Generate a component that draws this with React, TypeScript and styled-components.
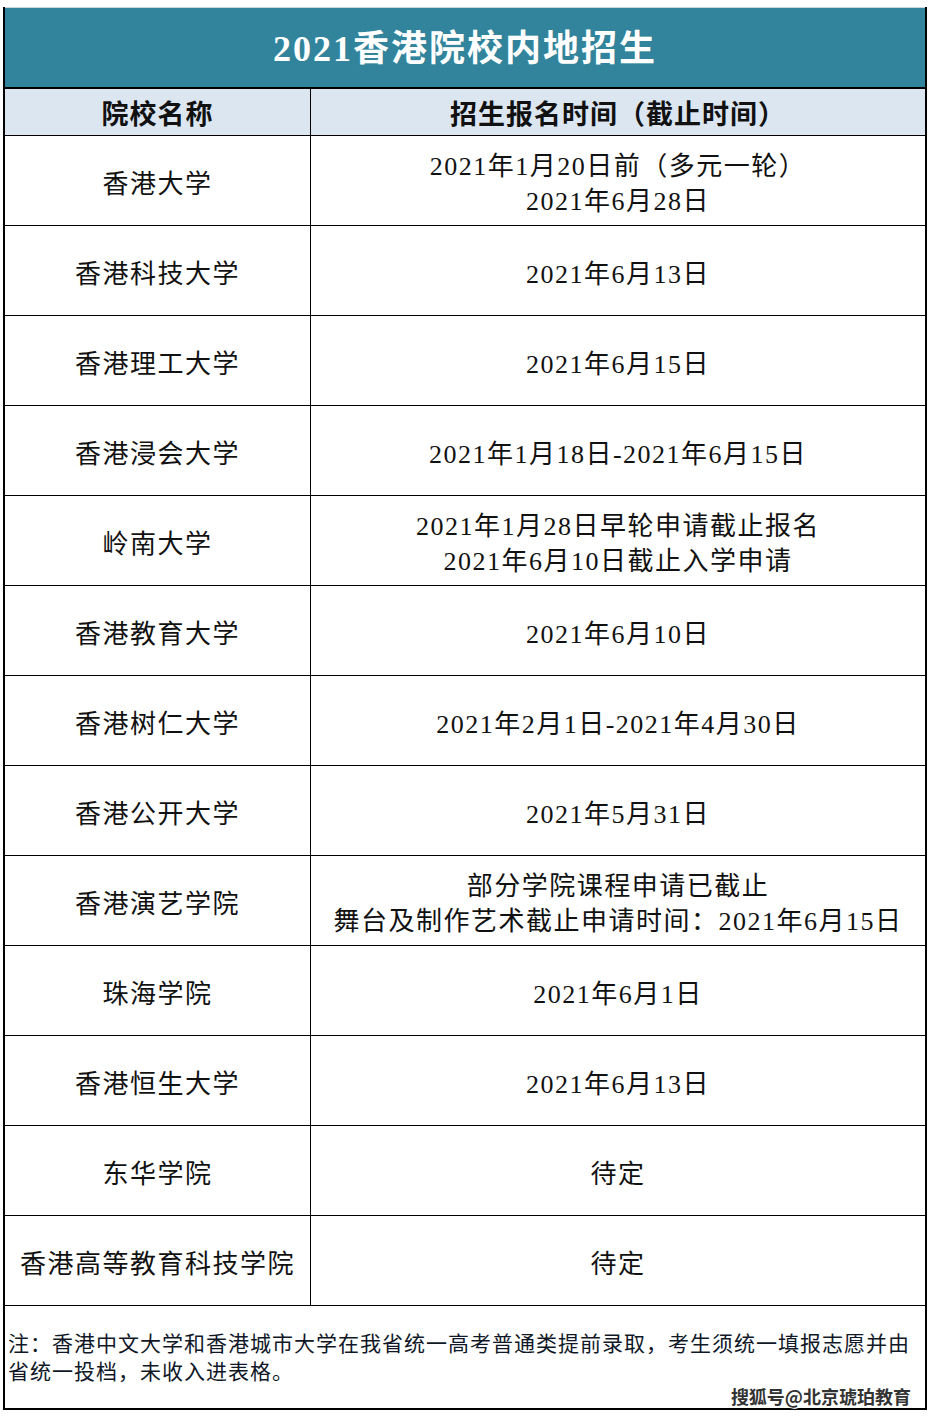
import React from 'react';
import styled, { createGlobalStyle } from 'styled-components';

interface School {
  name: string;
  dates: string[];
}

const schools: School[] = [
  { name: '香港大学', dates: ['2021年1月20日前（多元一轮）', '2021年6月28日'] },
  { name: '香港科技大学', dates: ['2021年6月13日'] },
  { name: '香港理工大学', dates: ['2021年6月15日'] },
  { name: '香港浸会大学', dates: ['2021年1月18日-2021年6月15日'] },
  { name: '岭南大学', dates: ['2021年1月28日早轮申请截止报名', '2021年6月10日截止入学申请'] },
  { name: '香港教育大学', dates: ['2021年6月10日'] },
  { name: '香港树仁大学', dates: ['2021年2月1日-2021年4月30日'] },
  { name: '香港公开大学', dates: ['2021年5月31日'] },
  { name: '香港演艺学院', dates: ['部分学院课程申请已截止', '舞台及制作艺术截止申请时间：2021年6月15日'] },
  { name: '珠海学院', dates: ['2021年6月1日'] },
  { name: '香港恒生大学', dates: ['2021年6月13日'] },
  { name: '东华学院', dates: ['待定'] },
  { name: '香港高等教育科技学院', dates: ['待定'] },
];

const App: React.FC = () => {
  return (
    <>
      <GlobalStyle />
      <Table>
        <Title>2021香港院校内地招生</Title>
        <HeaderRow>
          <HeadCell>院校名称</HeadCell>
          <HeadCell divider>招生报名时间（截止时间）</HeadCell>
        </HeaderRow>
        {schools.map((school) => (
          <Row key={school.name}>
            <Cell>{school.name}</Cell>
            <Cell divider>
              {school.dates.map((line, index) => (
                <Line key={index}>{line}</Line>
              ))}
            </Cell>
          </Row>
        ))}
        <Footer>
          <Note>
            注：香港中文大学和香港城市大学在我省统一高考普通类提前录取，考生须统一填报志愿并由省统一投档，未收入进表格。
          </Note>
          <Watermark>搜狐号@北京琥珀教育</Watermark>
        </Footer>
      </Table>
    </>
  );
};

const GlobalStyle = createGlobalStyle`
  body {
    margin: 0;
    background: #fff;
    font-family: "Liberation Serif", "Noto Sans CJK SC", serif;
    color: #111;
  }
`;

const Table = styled.div`
  margin: 7px 0 0 3px;
  width: 924px;
  box-sizing: border-box;
  border-left: 2px solid #000;
  border-right: 2px solid #000;
  border-bottom: 2px solid #000;
`;

const Title = styled.div`
  height: 80px;
  box-sizing: border-box;
  padding-bottom: 6px;
  border-top: 1px solid #c9d5e0;
  background: #31849b;
  color: #fff;
  font-size: 36px;
  font-weight: bold;
  letter-spacing: 2px;
  display: flex;
  align-items: center;
  justify-content: center;
`;

const HeaderRow = styled.div`
  display: grid;
  grid-template-columns: 305px 1fr;
  height: 48px;
  box-sizing: border-box;
  border-top: 2px solid #000;
  background: #dce6f1;
`;

const HeadCell = styled.div<{ divider?: boolean }>`
  display: flex;
  align-items: center;
  justify-content: center;
  font-size: 27px;
  font-weight: bold;
  letter-spacing: 1px;
  border-left: ${(p) => (p.divider ? '1px solid #000' : 'none')};
`;

const Row = styled.div`
  display: grid;
  grid-template-columns: 305px 1fr;
  height: 90px;
  box-sizing: border-box;
  border-top: 1px solid #000;
`;

const Cell = styled.div<{ divider?: boolean }>`
  display: flex;
  flex-direction: column;
  align-items: center;
  justify-content: center;
  padding-top: 7px;
  font-size: 26px;
  letter-spacing: 1.5px;
  line-height: 35px;
  border-left: ${(p) => (p.divider ? '1px solid #000' : 'none')};
`;

const Line = styled.div`
  white-space: nowrap;
`;

const Footer = styled.div`
  display: flex;
  flex-direction: column;
  height: 103px;
  box-sizing: border-box;
  border-top: 1.5px solid #000;
  padding: 24px 14px 0 3px;
`;

const Note = styled.div`
  font-size: 21px;
  line-height: 28px;
  letter-spacing: 1px;
  color: #101828;
`;

const Watermark = styled.div`
  align-self: flex-end;
  font-family: "Noto Sans CJK SC", sans-serif;
  font-size: 18px;
  font-weight: bold;
  line-height: 20px;
  color: #333;
  text-shadow: 0 0 2px #fff, 1px 1px 0 #fff, -1px -1px 0 #fff;
`;

export default App;
